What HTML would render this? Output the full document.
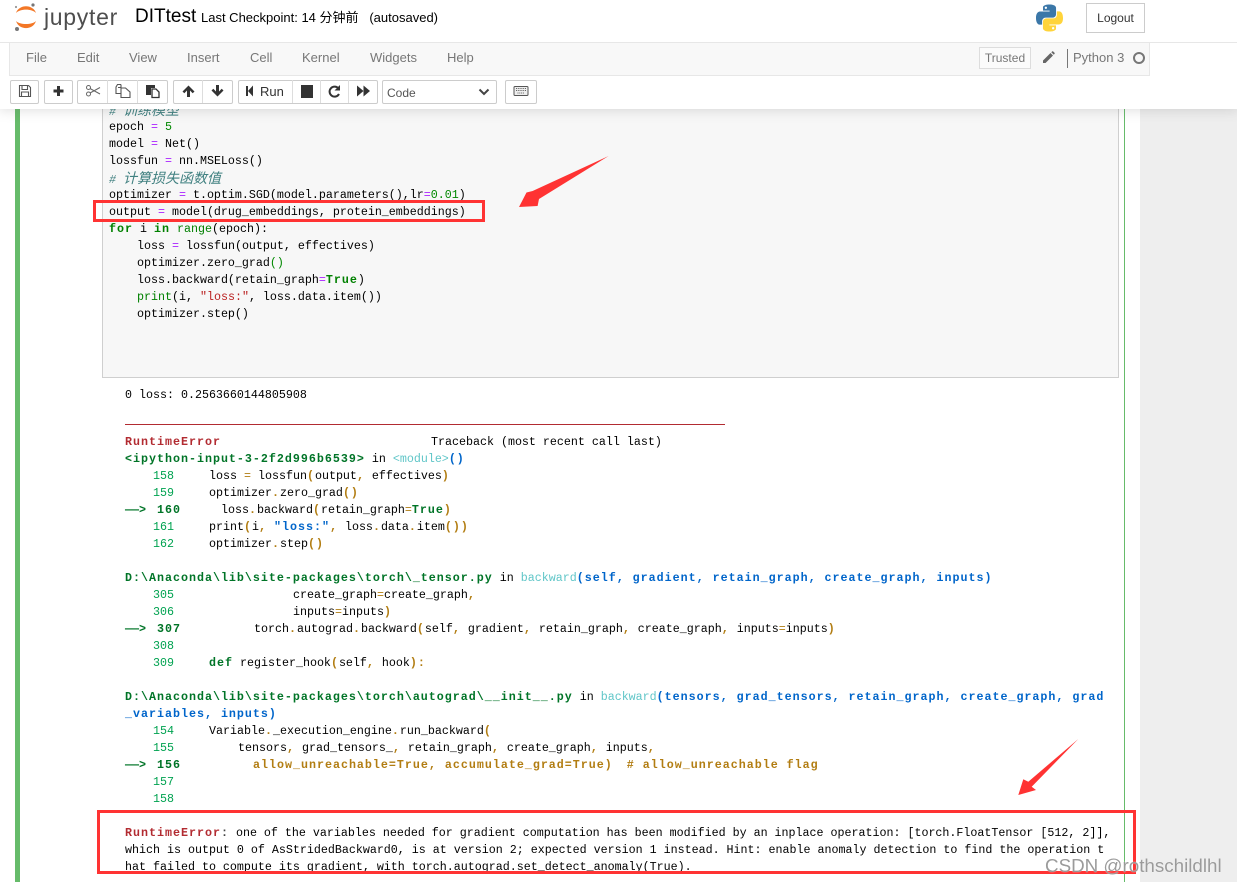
<!DOCTYPE html>
<html><head><meta charset="utf-8"><title>DITtest</title>
<style>
html,body{margin:0;padding:0;background:#fff}
#p{position:relative;width:1237px;height:882px;overflow:hidden;background:#fff;font-family:"Liberation Sans",sans-serif}
.abs{position:absolute}
.l{position:absolute;margin-top:1px;white-space:pre;font:11.67px/17px "Liberation Mono","Noto Sans CJK SC",monospace;color:#000;height:17px}
.l span{position:static}
.k{color:#008000;font-weight:bold;letter-spacing:1px}
.b{color:#008000}
.o{color:#AA22FF}
.n{color:#008800}
.s{color:#BA2121}
.t{font-weight:bold;color:#007427;letter-spacing:1px}
.c{font-style:italic;color:#408080}
.c i{font:italic 14px/17px "Noto Sans CJK SC",sans-serif}
.r{color:#B22B31;font-weight:bold;letter-spacing:1px}
.g{color:#007427;font-weight:bold;letter-spacing:1px}
.gn{color:#00A250}
.y{color:#B27D12}
.yb{color:#B27D12;font-weight:bold;letter-spacing:1px}
.cy{color:#60C6C8}
.bl{color:#0065CA;font-weight:bold;letter-spacing:1px}
.m{position:absolute;top:49px;font-size:13px;line-height:17px;color:#777}
.btn{position:absolute;top:80px;height:22px;border:1px solid #ccc;background:#fff;border-radius:2px;box-sizing:content-box}
.d{position:absolute;top:80px;width:1px;height:23px;background:#ddd}
.ic{position:absolute;top:83px}
</style></head><body><div id="p">

<!-- page / notebook -->
<div class="abs" style="left:1140px;top:0;width:97px;height:882px;background:#eee"></div>
<div class="abs" style="left:15px;top:100px;width:5px;height:782px;background:#66BB6A"></div>
<div class="abs" style="left:1124px;top:100px;width:1px;height:782px;background:#66BB6A"></div>
<div class="abs" style="left:102px;top:100px;width:1015px;height:276px;background:#f7f7f7;border:1px solid #cfcfcf"></div>

<!-- code -->
<div class="l" style="left:109px;top:101px"><span class="c"># <i>训练模型</i></span></div>
<div class="l" style="left:109px;top:118px">epoch <span class="o">=</span> <span class="n">5</span></div>
<div class="l" style="left:109px;top:135px">model <span class="o">=</span> Net()</div>
<div class="l" style="left:109px;top:152px">lossfun <span class="o">=</span> nn.MSELoss()</div>
<div class="l" style="left:109px;top:169px"><span class="c"># <i>计算损失函数值</i></span></div>
<div class="l" style="left:109px;top:186px">optimizer <span class="o">=</span> t.optim.SGD(model.parameters(),lr<span class="o">=</span><span class="n">0.01</span>)</div>
<div class="l" style="left:109px;top:203px">output <span class="o">=</span> model(drug_embeddings, protein_embeddings)</div>
<div class="l" style="left:109px;top:220px"><span class="k">for</span> i <span class="k">in</span> <span class="b">range</span>(epoch):</div>
<div class="l" style="left:137px;top:237px">loss <span class="o">=</span> lossfun(output, effectives)</div>
<div class="l" style="left:137px;top:254px">optimizer.zero_grad<span class="n">()</span></div>
<div class="l" style="left:137px;top:271px">loss.backward(retain_graph<span class="o">=</span><span class="k">True</span>)</div>
<div class="l" style="left:137px;top:288px"><span class="b">print</span>(i, <span class="s">"loss:"</span>, loss.data.item())</div>
<div class="l" style="left:137px;top:305px">optimizer.step()</div>

<!-- output -->
<div class="l" style="left:125px;top:386px">0 loss: 0.2563660144805908</div>
<div class="abs" style="left:125px;top:424px;width:600px;height:1px;background:#B22B31"></div>
<div class="l" style="left:125px;top:433px"><span class="r">RuntimeError</span></div>
<div class="l" style="left:431px;top:433px">Traceback (most recent call last)</div>
<div class="l" style="left:125px;top:450px"><span class="g">&lt;ipython-input-3-2f2d996b6539&gt;</span> in <span class="cy">&lt;module&gt;</span><span class="bl">()</span></div>

<div class="l gn" style="left:153px;top:467px">158</div>
<div class="l" style="left:209px;top:467px">loss <span class="y">=</span> lossfun<span class="yb">(</span>output<span class="yb">,</span> effectives<span class="yb">)</span></div>
<div class="l gn" style="left:153px;top:484px">159</div>
<div class="l" style="left:209px;top:484px">optimizer<span class="yb">.</span>zero_grad<span class="yb">()</span></div>
<div class="l" style="left:125px;top:501px;color:#007427"><b>——&gt;</b></div>
<div class="l g" style="left:157px;top:501px">160</div>
<div class="l" style="left:221px;top:501px">loss<span class="yb">.</span>backward<span class="yb">(</span>retain_graph<span class="y">=</span><span class="g">True</span><span class="yb">)</span></div>
<div class="l gn" style="left:153px;top:518px">161</div>
<div class="l" style="left:209px;top:518px">print<span class="yb">(</span>i<span class="yb">,</span> <span class="bl">"loss:"</span><span class="yb">,</span> loss<span class="yb">.</span>data<span class="yb">.</span>item<span class="yb">())</span></div>
<div class="l gn" style="left:153px;top:535px">162</div>
<div class="l" style="left:209px;top:535px">optimizer<span class="yb">.</span>step<span class="yb">()</span></div>

<div class="l" style="left:125px;top:569px"><span class="g">D:\Anaconda\lib\site-packages\torch\_tensor.py</span> in <span class="cy">backward</span><span class="bl">(self, gradient, retain_graph, create_graph, inputs)</span></div>
<div class="l gn" style="left:153px;top:586px">305</div>
<div class="l" style="left:293px;top:586px">create_graph<span class="y">=</span>create_graph<span class="yb">,</span></div>
<div class="l gn" style="left:153px;top:603px">306</div>
<div class="l" style="left:293px;top:603px">inputs<span class="y">=</span>inputs<span class="yb">)</span></div>
<div class="l" style="left:125px;top:620px;color:#007427"><b>——&gt;</b></div>
<div class="l g" style="left:157px;top:620px">307</div>
<div class="l" style="left:254px;top:620px">torch<span class="yb">.</span>autograd<span class="yb">.</span>backward<span class="yb">(</span>self<span class="yb">,</span> gradient<span class="yb">,</span> retain_graph<span class="yb">,</span> create_graph<span class="yb">,</span> inputs<span class="y">=</span>inputs<span class="yb">)</span></div>
<div class="l gn" style="left:153px;top:637px">308</div>
<div class="l gn" style="left:153px;top:654px">309</div>
<div class="l" style="left:209px;top:654px"><span class="g">def</span> register_hook<span class="yb">(</span>self<span class="yb">,</span> hook<span class="yb">):</span></div>

<div class="l" style="left:125px;top:688px"><span class="g">D:\Anaconda\lib\site-packages\torch\autograd\__init__.py</span> in <span class="cy">backward</span><span class="bl">(tensors, grad_tensors, retain_graph, create_graph, grad</span></div>
<div class="l" style="left:125px;top:705px"><span class="bl">_variables, inputs)</span></div>
<div class="l gn" style="left:153px;top:722px">154</div>
<div class="l" style="left:209px;top:722px">Variable<span class="yb">.</span>_execution_engine<span class="yb">.</span>run_backward<span class="yb">(</span></div>
<div class="l gn" style="left:153px;top:739px">155</div>
<div class="l" style="left:238px;top:739px">tensors<span class="yb">,</span> grad_tensors_<span class="yb">,</span> retain_graph<span class="yb">,</span> create_graph<span class="yb">,</span> inputs<span class="yb">,</span></div>
<div class="l" style="left:125px;top:756px;color:#007427"><b>——&gt;</b></div>
<div class="l g" style="left:157px;top:756px">156</div>
<div class="l" style="left:253px;top:756px"><span class="yb">allow_unreachable=True, accumulate_grad=True)</span>  <span class="yb"># allow_unreachable flag</span></div>
<div class="l gn" style="left:153px;top:773px">157</div>
<div class="l gn" style="left:153px;top:790px">158</div>

<div class="l" style="left:125px;top:824px"><span class="r">RuntimeError</span><span class="yb" style="color:#444">:</span> one of the variables needed for gradient computation has been modified by an inplace operation: [torch.FloatTensor [512, 2]],</div>
<div class="l" style="left:125px;top:841px">which is output 0 of AsStridedBackward0, is at version 2; expected version 1 instead. Hint: enable anomaly detection to find the operation t</div>
<div class="l" style="left:125px;top:858px">hat failed to compute its gradient, with torch.autograd.set_detect_anomaly(True).</div>

<!-- header -->
<div class="abs" style="left:0;top:0;width:1237px;height:109px;background:#fff;box-shadow:0 0 12px 1px rgba(87,87,87,.2)"></div>

<svg class="abs" style="left:14px;top:3px" width="26" height="30" viewBox="0 0 26 30">
<path d="M2 10C5 1 19 1 22 10C18 5.500 6 5.500 2 10Z" fill="#F37726"/>
<path d="M2 18C5 27.500 19 27.500 22 18C18 22 6 22 2 18Z" fill="#F37726"/>
<circle cx="19" cy="2" r="1.600" fill="#767677"/><circle cx="3" cy="26" r="2" fill="#767677"/><circle cx="2" cy="4" r="1.100" fill="#989798"/>
</svg>
<div class="abs" style="left:44px;top:0;font-size:23px;line-height:34px;color:#4E4E4E;letter-spacing:.7px">jupyter</div>
<div class="abs" style="left:135px;top:3px;font-size:19px;line-height:27px;color:#000">DITtest</div>
<div class="abs" style="left:201px;top:9px;font:13px/18px 'Liberation Sans','Noto Sans CJK SC',sans-serif;color:#000;white-space:pre">Last Checkpoint: 14 分钟前   (autosaved)</div>

<svg class="abs" style="left:1036px;top:4px" width="27" height="28" viewBox="0 0 110 110">
<path fill="#3B77A8" d="M54.900 0C26.800 0 28.600 12.200 28.600 12.200l0 12.600h26.800v3.800H17.900S0 26.600 0 54.900s15.600 27.300 15.600 27.300h9.300V69s-.5-15.600 15.400-15.600h26.500s14.900.2 14.900-14.400V14.900S83.900 0 54.900 0zM40.200 8.500a4.800 4.800 0 1 1 0 9.600 4.800 4.800 0 0 1 0-9.600z"/>
<path fill="#FFD43B" transform="rotate(180 55 55)" d="M54.900 0C26.800 0 28.600 12.200 28.600 12.200l0 12.600h26.800v3.800H17.900S0 26.600 0 54.900s15.600 27.300 15.600 27.300h9.300V69s-.5-15.600 15.400-15.600h26.500s14.900.2 14.900-14.400V14.900S83.900 0 54.900 0zM40.200 8.500a4.800 4.800 0 1 1 0 9.600 4.800 4.800 0 0 1 0-9.600z"/>
</svg>
<div class="abs" style="left:1086px;top:3px;width:57px;height:28px;border:1px solid #ccc;text-align:center;font-size:12px;line-height:28px;color:#333">Logout</div>

<!-- menubar -->
<div class="abs" style="left:0;top:42px;width:1237px;height:1px;background:#e7e7e7"></div>
<div class="abs" style="left:9px;top:42px;width:1139px;height:32px;background:#f8f8f8;border:1px solid #e7e7e7"></div>
<div class="m" style="left:26px">File</div>
<div class="m" style="left:77px">Edit</div>
<div class="m" style="left:129px">View</div>
<div class="m" style="left:187px">Insert</div>
<div class="m" style="left:250px">Cell</div>
<div class="m" style="left:302px">Kernel</div>
<div class="m" style="left:370px">Widgets</div>
<div class="m" style="left:447px">Help</div>
<div class="abs" style="left:979px;top:47px;width:50px;height:20px;border:1px solid #ddd;background:#fbfbfb;font-size:12px;line-height:20px;text-align:center;color:#777">Trusted</div>
<svg class="abs" style="left:1042px;top:51px" width="13" height="13" viewBox="0 0 13 13"><path d="M1 9.500L8.500 2l2.500 2.500L3.500 12H1zM9.300 1.200l.8-.7c.4-.3.8-.3 1.100 0l1.300 1.300c.3.3.3.8 0 1.100l-.7.8z" fill="#666"/></svg>
<div class="abs" style="left:1067px;top:49px;width:1px;height:19px;background:#777"></div>
<div class="abs" style="left:1073px;top:49px;font-size:13px;line-height:17px;color:#777">Python 3</div>
<div class="abs" style="left:1133px;top:52px;width:8px;height:8px;border:2px solid #777;border-radius:50%"></div>

<!-- toolbar -->
<div class="btn" style="left:10px;width:27px"></div>
<div class="btn" style="left:44px;width:27px"></div>
<div class="btn" style="left:77px;width:89px"></div><div class="d" style="left:107px"></div><div class="d" style="left:137px"></div>
<div class="btn" style="left:173px;width:58px"></div><div class="d" style="left:202px"></div>
<div class="btn" style="left:238px;width:138px"></div><div class="d" style="left:292px"></div><div class="d" style="left:320px"></div><div class="d" style="left:348px"></div>
<div class="btn" style="left:382px;width:113px"></div>
<div class="btn" style="left:505px;width:30px"></div>

<svg class="ic" style="left:18px" width="14" height="16" viewBox="0 0 14 16"><path d="M1.500 2.500h9l2 2v9h-11zM4 2.500v4h5.500v-4M3.500 13.500v-4.500h7v4.500" fill="none" stroke="#555" stroke-width="1.100"/></svg>
<svg class="ic" style="left:52px" width="13" height="16" viewBox="0 0 13 16"><path d="M5 3h3v3.500h3.500v3H8V13H5V9.500H1.500v-3H5z" fill="#333"/></svg>
<svg class="ic" style="left:85px" width="16" height="16" viewBox="0 0 16 16"><g fill="none" stroke="#666" stroke-width="1"><circle cx="3.500" cy="4.500" r="2"/><circle cx="3.500" cy="11" r="2"/><path d="M5 5.500L15 11M5 10L15 4.500"/></g></svg>
<svg class="ic" style="left:115px" width="16" height="16" viewBox="0 0 16 16"><path d="M6 1.500H2.500L1 4v6.500h5M6 5h4.500L15 9v5.500H6zM6 1.500v3H3" fill="none" stroke="#555" stroke-width="1.100"/></svg>
<svg class="ic" style="left:145px" width="15" height="16" viewBox="0 0 15 16"><path d="M1 2h9v3H6v7H1z" fill="#333"/><path d="M7 6h4l3 3v5.500H7z" fill="#fff" stroke="#333" stroke-width="1.300"/></svg>
<svg class="ic" style="left:181px" width="15" height="16" viewBox="0 0 15 16"><path d="M7.500 2.500L13.500 8.500 11.700 10.300 9 7.500V14H6V7.500L3.300 10.300 1.500 8.500z" fill="#333"/></svg>
<svg class="ic" style="left:210px" width="15" height="16" viewBox="0 0 15 16"><path d="M7.500 13.500L1.500 7.500 3.300 5.700 6 8.500V2H9v6.500L11.700 5.700 13.500 7.500z" fill="#333"/></svg>
<svg class="ic" style="left:245px" width="10" height="16" viewBox="0 0 10 16"><path d="M1 3h2v10H1zM3 8l5-5.500V13.500z" fill="#333"/></svg>
<div class="abs" style="left:260px;top:84px;font-size:13px;line-height:16px;color:#333">Run</div>
<div class="abs" style="left:301px;top:85px;width:12px;height:13px;background:#333"></div>
<svg class="ic" style="left:327px" width="15" height="16" viewBox="0 0 15 16"><path d="M11.500 5.500A5 5 0 1 0 12 11" fill="none" stroke="#333" stroke-width="2"/><path d="M13 2v5.500H7.500z" fill="#333"/></svg>
<svg class="ic" style="left:356px" width="15" height="16" viewBox="0 0 15 16"><path d="M1 2.500L7.500 8 1 13.500zM7.500 2.500L14 8 7.500 13.500z" fill="#333"/></svg>
<div class="abs" style="left:387px;top:85px;font-size:12px;line-height:16px;color:#555">Code</div>
<svg class="abs" style="left:478px;top:88px" width="12" height="8" viewBox="0 0 12 8"><path d="M1.500 1.500L6 6l4.500-4.500" fill="none" stroke="#444" stroke-width="2"/></svg>
<svg class="ic" style="left:513px" width="16" height="16" viewBox="0 0 16 16"><rect x="1" y="3.500" width="14" height="9" rx="1" fill="#eee" stroke="#555"/><path d="M3 5.500h10M3 7.500h10M4.500 10h7" stroke="#666" stroke-dasharray="1 .8"/></svg>

<!-- annotations -->
<div class="abs" style="left:93px;top:200px;width:386px;height:16px;border:3px solid #F33"></div>
<div class="abs" style="left:97px;top:810px;width:1033px;height:58px;border:3px solid #F33"></div>
<svg class="abs" style="left:0;top:0" width="1237" height="882"><path fill="#F33" d="M519 207L526.500 192.500 532.600 191 608.600 156 539 199 537.600 206z"/><path fill="#F33" d="M1018.300 795L1023.300 779.300 1028.300 781.700 1078.300 739 1031.700 786.700 1036 790z"/></svg>
<div class="abs" style="left:1045px;top:855px;font-size:18.800px;line-height:22px;color:rgba(130,130,130,.8);text-shadow:0 0 1px #fff;white-space:pre">CSDN @rothschildlhl</div>

</div></body></html>
